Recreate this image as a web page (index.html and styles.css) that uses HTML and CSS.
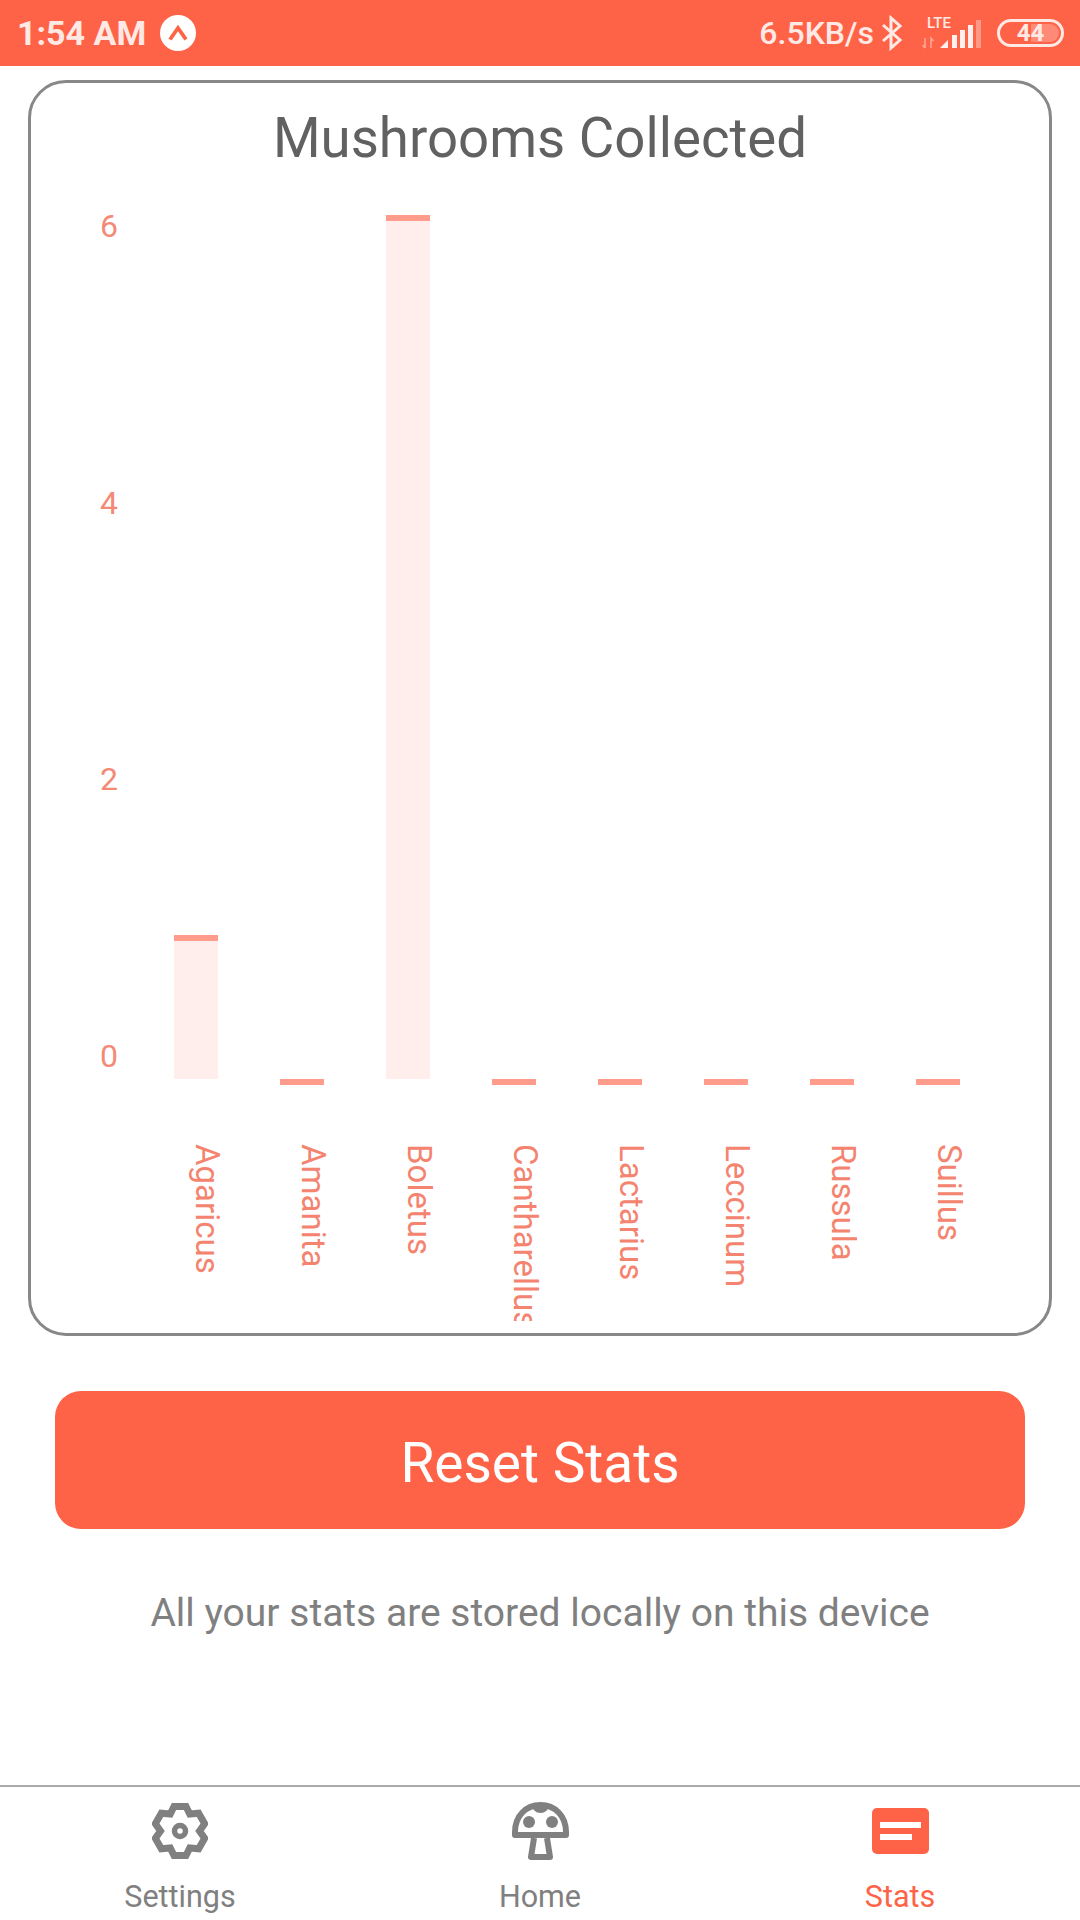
FILE: index.html
```html
<!DOCTYPE html>
<html lang="en">
<head>
	<meta charset="UTF-8">
	<meta name="viewport" content="width=device-width, initial-scale=1.0">
	<title>Stats</title>
	<link rel="stylesheet" href="styles.css">
</head>
<body>
	<div class="page">
		<div class="status-bar">
			<div class="status-left">
				<span class="status-time">1:54 AM</span>
				<svg class="expo-icon" width="36" height="36" viewBox="0 0 36 36">
					<circle cx="18" cy="18" r="18" fill="#fff"/>
					<path d="M10 24.5 L18 13 L26 24.5" fill="none" stroke="#ff6347" stroke-width="3.8"/>
				</svg>
			</div>
			<div class="status-right">
				<span class="status-speed">6.5KB/s</span>
				<svg class="bt-icon" width="22" height="36" viewBox="0 0 22 36">
					<path d="M2 10 L19 25 L10 33 V3 L19 11 L2 26" fill="none" stroke="#ffe9e5" stroke-width="3"/>
				</svg>
				<div class="network">
					<span class="lte">LTE</span>
					<svg class="signal" width="60" height="32" viewBox="0 0 60 32">
						<path d="M3 21 V31 M0.5 28 L3 31 M9 31 V21 L11.5 24" fill="none" stroke="#fff" stroke-opacity="0.45" stroke-width="1.5"/>
						<path d="M18 31 L26 23 V31 Z" fill="#fff" fill-opacity="0.9"/>
						<rect x="30" y="18" width="5" height="13" fill="#fff" fill-opacity="0.9"/>
						<rect x="38" y="13" width="5" height="18" fill="#fff" fill-opacity="0.9"/>
						<rect x="46" y="8" width="5" height="23" fill="#fff" fill-opacity="0.9"/>
						<rect x="54" y="3" width="5" height="28" fill="#fff" fill-opacity="0.35"/>
					</svg>
				</div>
				<div class="battery">
					<div class="battery-level"></div>
					<span class="battery-text">44</span>
				</div>
			</div>
		</div>

		<div class="content">
			<div class="chart-card">
				<h1 class="chart-title">Mushrooms Collected</h1>
				<div class="chart">
					<div class="y-axis">
						<span>6</span>
						<span>4</span>
						<span>2</span>
						<span>0</span>
					</div>
					<div class="plot">
						<div class="col"><div class="bar" style="height:144px"></div></div>
						<div class="col"><div class="bar empty"></div></div>
						<div class="col"><div class="bar" style="height:864px"></div></div>
						<div class="col"><div class="bar empty"></div></div>
						<div class="col"><div class="bar empty"></div></div>
						<div class="col"><div class="bar empty"></div></div>
						<div class="col"><div class="bar empty"></div></div>
						<div class="col"><div class="bar empty"></div></div>
					</div>
				</div>
				<div class="x-axis">
					<div class="x-label"><span>Agaricus</span></div>
					<div class="x-label"><span>Amanita</span></div>
					<div class="x-label"><span>Boletus</span></div>
					<div class="x-label"><span>Cantharellus</span></div>
					<div class="x-label"><span>Lactarius</span></div>
					<div class="x-label"><span>Leccinum</span></div>
					<div class="x-label"><span>Russula</span></div>
					<div class="x-label"><span>Suillus</span></div>
				</div>
			</div>

			<button class="reset-btn">Reset Stats</button>
			<p class="note">All your stats are stored locally on this device</p>
		</div>

		<div class="tab-bar">
			<div class="tab">
				<svg class="tab-icon" width="56" height="58" viewBox="0 0 56 56">
					<polygon points="22,3.5 34,3.5 37.75,11.1 46.65,10.3 52.65,20.7 47.5,28 52.65,35.3 46.65,45.7 37.75,44.9 34,52.5 22,52.5 18.25,44.9 9.35,45.7 3.35,35.3 8.5,28 3.35,20.7 9.35,10.3 18.25,11.1" fill="none" stroke="#808080" stroke-width="7" stroke-linejoin="miter" stroke-miterlimit="2"/>
					<circle cx="28" cy="28" r="5.5" fill="none" stroke="#808080" stroke-width="5.5"/>
				</svg>
				<span class="tab-label">Settings</span>
			</div>
			<div class="tab">
				<svg class="tab-icon" width="57" height="58" viewBox="0 0 57 58">
					<path d="M3 33 V30 C3 14 14 3 28.5 3 C43 3 54 14 54 30 V33 Z" fill="none" stroke="#808080" stroke-width="6" stroke-linejoin="round"/>
					<circle cx="17" cy="20" r="6" fill="#808080"/>
					<circle cx="40" cy="20" r="6" fill="#808080"/>
					<path d="M20 3 A8.5 8 0 0 0 37 3 Z" fill="#808080"/>
					<path d="M22 36 L19 55 H38 L35 36" fill="none" stroke="#808080" stroke-width="6" stroke-linejoin="round"/>
				</svg>
				<span class="tab-label">Home</span>
			</div>
			<div class="tab active">
				<svg class="tab-icon" width="57" height="58" viewBox="0 0 57 58">
					<rect x="0" y="6" width="57" height="46" rx="5" fill="#ff6347"/>
					<rect x="8" y="20" width="41" height="6" fill="#fff"/>
					<rect x="8" y="32" width="32" height="6" fill="#fff"/>
				</svg>
				<span class="tab-label">Stats</span>
			</div>
		</div>
	</div>
</body>
</html>
```

FILE: styles.css
```css
body {
	margin: 0;
	background-color: #fff;
	font-family: Roboto, sans-serif;
}

.page {
	display: flex;
	flex-direction: column;
	height: 1920px;
	overflow: hidden;
}

/* status bar */
.status-bar {
	display: flex;
	justify-content: space-between;
	align-items: center;
	height: 66px;
	padding: 0 16px 0 17px;
	background-color: #ff6347;
	color: #ffe9e5;
	font-weight: 500;
	font-size: 32px;
}

.status-left,
.status-right {
	display: flex;
	align-items: center;
}

.status-time {
	font-size: 34px;
	font-weight: 700;
}

.expo-icon {
	margin-left: 14px;
}

.bt-icon {
	margin-left: 7px;
}

.network {
	position: relative;
	margin-left: 19px;
	width: 60px;
	height: 32px;
}

.lte {
	position: absolute;
	left: 5px;
	top: -1px;
	font-size: 15px;
	line-height: 14px;
}

.signal {
	display: block;
}

.battery {
	position: relative;
	display: flex;
	justify-content: center;
	align-items: center;
	box-sizing: border-box;
	margin-left: 15px;
	width: 67px;
	height: 28px;
	border: 3px solid #ffe9e5;
	border-radius: 14px;
	overflow: hidden;
}

.battery-level {
	position: absolute;
	right: 2px;
	top: 2px;
	bottom: 2px;
	width: 28px;
	border-radius: 0 10px 10px 0;
	background-color: rgba(255, 255, 255, .25);
}

.battery-text {
	position: relative;
	font-size: 24px;
	font-weight: 700;
	line-height: 22px;
}

/* main content */
.content {
	flex: 1;
	padding: 14px 28px 0;
}

.chart-card {
	box-sizing: border-box;
	padding: 22px 0 12px;
	border: 3px solid #888;
	border-radius: 38px;
}

.chart-title {
	margin: 0 0 35px;
	font-size: 54.6px;
	font-weight: 400;
	line-height: 66px;
	text-align: center;
	color: #616161;
}

.chart {
	display: flex;
}

.y-axis {
	display: flex;
	flex-direction: column;
	justify-content: space-between;
	box-sizing: border-box;
	width: 112px;
	height: 870px;
	padding-right: 25px;
	font-size: 32px;
	line-height: 40px;
	text-align: right;
	color: #f48a76;
}

.plot {
	display: flex;
	height: 873px;
}

.col {
	display: flex;
	align-items: flex-end;
	justify-content: center;
	width: 106px;
}

.bar {
	box-sizing: border-box;
	width: 44px;
	border-top: 6px solid #ff9c8c;
	background-color: #ffeeeb;
}

.bar.empty {
	height: 6px;
	margin-bottom: -6px;
}

.x-axis {
	display: flex;
	margin: 65px 0 0 112px;
}

.x-label {
	box-sizing: border-box;
	display: flex;
	justify-content: flex-start;
	align-items: center;
	width: 106px;
	height: 177px;
	padding-left: 22px;
	overflow: hidden;
	writing-mode: vertical-rl;
	font-size: 33px;
	line-height: 40px;
	white-space: nowrap;
	color: #f4846f;
}

.reset-btn {
	display: block;
	width: 970px;
	height: 138px;
	margin: 55px 27px 0;
	padding: 6px 0 0;
	border: none;
	border-radius: 26px;
	background-color: #ff6347;
	color: #fff;
	font-family: Roboto, sans-serif;
	font-size: 55px;
}

.note {
	margin: 62px 0 0;
	font-size: 39px;
	line-height: 44px;
	text-align: center;
	color: #808080;
}

/* bottom tabs */
.tab-bar {
	display: flex;
	height: 133px;
	border-top: 2px solid #aaa;
}

.tab {
	display: flex;
	flex-direction: column;
	align-items: center;
	flex: 1;
	padding-top: 15px;
	color: #808080;
}

.tab-icon {
	display: block;
}

.tab-label {
	margin-top: 17px;
	font-size: 30.5px;
	line-height: 40px;
}

.tab.active {
	color: #ff6347;
}
```
